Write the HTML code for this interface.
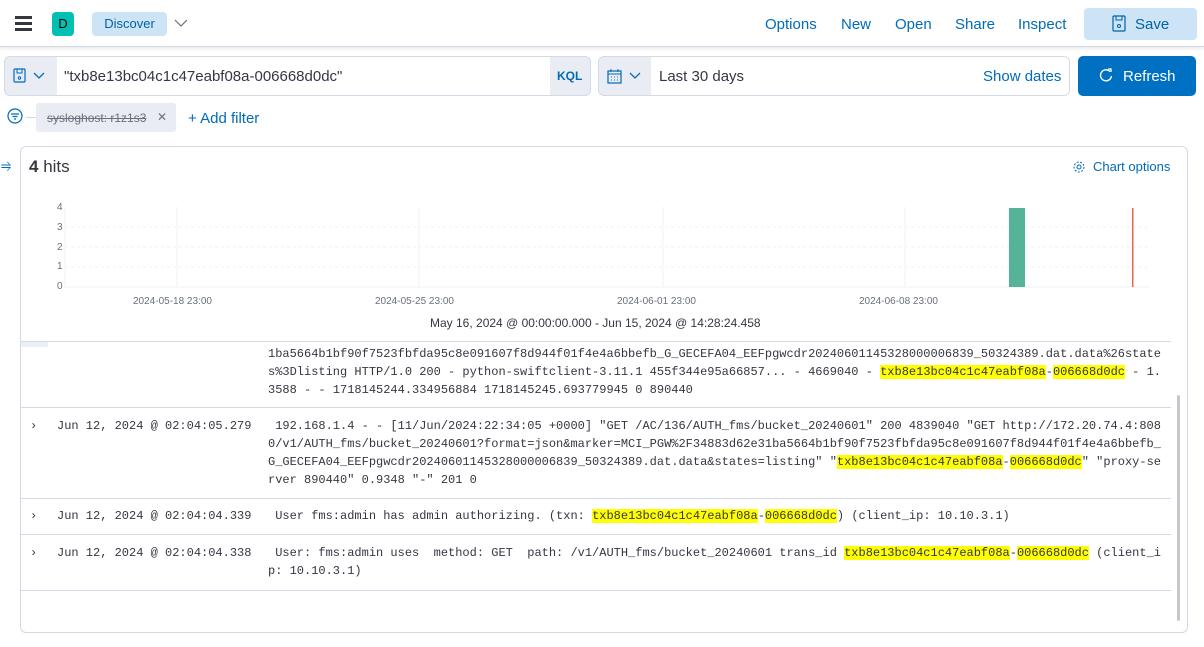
<!DOCTYPE html>
<html><head><meta charset="utf-8"><style>
*{box-sizing:border-box;margin:0;padding:0}
body{width:1204px;height:647px;background:#fff;font-family:"Liberation Sans",sans-serif;position:relative;overflow:hidden;color:#343741}
.a{position:absolute}
.link{color:#006bb8;font-size:15px}
.mono{font-family:"Liberation Mono",monospace;font-size:12px;color:#343741;line-height:18px;white-space:pre}
.hl{background:#ff0}
.sep{position:absolute;left:21px;width:1150px;height:1px;background:#d3dae6}
</style></head><body>
<div class="a" style="left:0;top:0;width:1204px;height:47px;border-bottom:1px solid #d3dae6;box-shadow:0 2px 3px rgba(0,0,0,.08)"></div>
<div class="a" style="left:15px;top:16px;width:17px;height:2.5px;background:#343741;box-shadow:0 6px 0 #343741,0 12px 0 #343741"></div>
<div class="a" style="left:52px;top:12px;width:22px;height:24px;background:#00bfb3;border-radius:4px;font-size:13px;color:#000;text-align:center;line-height:24px">D</div>
<div class="a" style="left:92px;top:12px;width:75px;height:24px;background:#cce4f5;border-radius:4px;color:#0061a6;font-size:13px;text-align:center;line-height:24px">Discover</div>
<svg class="a" style="left:174px;top:18px" width="14" height="10"><path d="M1 2l6 6 6-6" fill="none" stroke="#69707d" stroke-width="1.2"/></svg>
<div class="a link" style="left:765px;top:16px">Options</div>
<div class="a link" style="left:841px;top:16px">New</div>
<div class="a link" style="left:895px;top:16px">Open</div>
<div class="a link" style="left:955px;top:16px">Share</div>
<div class="a link" style="left:1018px;top:16px">Inspect</div>
<div class="a" style="left:1084px;top:8px;width:113px;height:32px;background:#cce4f5;border-radius:4px"></div>
<svg class="a" style="left:1112px;top:15px" width="16" height="18"><rect x="1" y="1" width="12" height="15" rx="1" fill="none" stroke="#0061a6" stroke-width="1.2"/><rect x="4" y="1" width="6" height="4" fill="none" stroke="#0061a6"/><circle cx="7" cy="11" r="1.5" fill="none" stroke="#0061a6"/></svg>
<div class="a" style="left:1135px;top:16px;color:#0061a6;font-size:15px">Save</div>
<div class="a" style="left:4px;top:56px;width:587px;height:40px;border:1px solid #d3dae6;border-radius:6px;background:#e9edf3;overflow:hidden">
  <div class="a" style="left:52px;top:0;width:493px;height:38px;background:#fff"></div>
</div>
<svg class="a" style="left:13px;top:68px" width="14" height="16"><rect x="1" y="1" width="11" height="13" rx="1" fill="none" stroke="#006bb8" stroke-width="1.2"/><rect x="4" y="1" width="5" height="4" fill="none" stroke="#006bb8"/><circle cx="6.5" cy="10" r="1.2" fill="none" stroke="#006bb8"/></svg>
<svg class="a" style="left:33px;top:72px" width="12" height="8"><path d="M1 1l5 5 5-5" fill="none" stroke="#006bb8" stroke-width="1.3"/></svg>
<div class="a" style="left:64px;top:68px;font-size:15px;color:#343741">"txb8e13bc04c1c47eabf08a-006668d0dc"</div>
<div class="a" style="left:557px;top:69px;font-size:12px;color:#006bb8;font-weight:bold">KQL</div>
<div class="a" style="left:598px;top:56px;width:472px;height:40px;border:1px solid #d3dae6;border-radius:6px;background:#e9edf3;overflow:hidden">
  <div class="a" style="left:52px;top:0;width:420px;height:38px;background:#fff"></div>
</div>
<svg class="a" style="left:607px;top:68px" width="16" height="16"><rect x="1" y="3" width="13" height="12" fill="none" stroke="#006bb8" stroke-width="1.2"/><path d="M1 6h13M4 1v3M11 1v3M4 9h1M7 9h1M10 9h1M4 12h1M7 12h1M10 12h1" stroke="#006bb8"/></svg>
<svg class="a" style="left:629px;top:72px" width="12" height="8"><path d="M1 1l5 5 5-5" fill="none" stroke="#006bb8" stroke-width="1.3"/></svg>
<div class="a" style="left:659px;top:68px;font-size:15px">Last 30 days</div>
<div class="a" style="left:983px;top:68px;font-size:15px;color:#006bb8">Show dates</div>
<div class="a" style="left:1078px;top:56px;width:118px;height:40px;background:#0071c2;border-radius:5px"></div>
<svg class="a" style="left:1099px;top:68px" width="14" height="15"><path d="M11 3.5A5.5 5.5 0 1 0 12.5 8" fill="none" stroke="#fff" stroke-width="1.4"/><path d="M9 1h3v3" fill="none" stroke="#fff" stroke-width="1.3"/></svg>
<div class="a" style="left:1123px;top:68px;font-size:15px;color:#fff">Refresh</div>
<svg class="a" style="left:7px;top:108px" width="18" height="18"><circle cx="8" cy="8" r="7" fill="none" stroke="#006bb8" stroke-width="1.2"/><path d="M4 6h8M5.5 8.5h5M7 11h2" stroke="#006bb8" stroke-width="1.2"/></svg>
<div class="a" style="left:26px;top:117px;width:10px;height:1px;background:#d3dae6"></div>
<div class="a" style="left:36px;top:103px;width:140px;height:29px;background:#e9edf3;border-radius:3px"></div>
<div class="a" style="left:47px;top:111px;font-size:12px;color:#69707d;text-decoration:line-through">sysloghost: r1z1s3</div>
<div class="a" style="left:157px;top:110px;font-size:12px;color:#69707d">✕</div>
<div class="a" style="left:188px;top:110px;font-size:15px;color:#006bb8">+ Add filter</div>
<div class="a" style="left:1px;top:157px;font-size:13px;color:#006bb8">⥤</div>
<div class="a" style="left:20px;top:146px;width:1168px;height:487px;border:1px solid #d3dae6;border-radius:6px"></div>
<div class="a" style="left:29px;top:157px;font-size:17px"><b>4</b> hits</div>
<svg class="a" style="left:1072px;top:160px" width="14" height="14"><circle cx="7" cy="7" r="2" fill="none" stroke="#006bb8"/><circle cx="7" cy="7" r="5" fill="none" stroke="#006bb8" stroke-dasharray="2 1.5"/></svg>
<div class="a" style="left:1093px;top:159px;font-size:13px;color:#006bb8">Chart options</div>
<svg class="a" style="left:0;top:195px" width="1204" height="140">
<g font-family="Liberation Sans" font-size="10" fill="#69707d">
<text x="57" y="15">4</text><text x="57" y="35">3</text><text x="57" y="55">2</text><text x="57" y="74">1</text><text x="57" y="94">0</text>
<text x="133" y="109">2024-05-18 23:00</text><text x="375" y="109">2024-05-25 23:00</text><text x="617" y="109">2024-06-01 23:00</text><text x="859" y="109">2024-06-08 23:00</text>
</g>
<g stroke="#eef2f7" stroke-dasharray="3 3"><path d="M65 32H1150M65 52H1150M65 72H1150"/></g>
<path d="M65 12V92H1150M177 12V92M419 12V92M663 12V92M905 12V92" stroke="#eef2f7" fill="none"/>
<rect x="1009" y="13" width="16" height="79" fill="#54b399"/>
<rect x="1132" y="13" width="1.5" height="79" fill="#e7664c"/>
</svg>
<div class="a" style="left:430px;top:316px;font-size:12px;color:#343741">May 16, 2024 @ 00:00:00.000 - Jun 15, 2024 @ 14:28:24.458</div>
<div class="sep" style="top:341px"></div>
<div class="a" style="left:21px;top:342px;width:27px;height:5px;background:#e9f0f8"></div>
<div class="a mono" style="left:268px;top:345px">1ba5664b1bf90f7523fbfda95c8e091607f8d944f01f4e4a6bbefb_G_GECEFA04_EEFpgwcdr20240601145328000006839_50324389.dat.data%26state
s%3Dlisting HTTP/1.0 200 - python-swiftclient-3.11.1 455f344e95a66857... - 4669040 - <span class="hl">txb8e13bc04c1c47eabf08a</span>-<span class="hl">006668d0dc</span> - 1.
3588 - - 1718145244.334956884 1718145245.693779945 0 890440</div>
<div class="sep" style="top:407px"></div>
<div class="a mono" style="left:30px;top:417px;color:#343741">›</div>
<div class="a mono" style="left:57px;top:417px">Jun 12, 2024 @ 02:04:05.279</div>
<div class="a mono" style="left:268px;top:417px"> 192.168.1.4 - - [11/Jun/2024:22:34:05 +0000] "GET /AC/136/AUTH_fms/bucket_20240601" 200 4839040 "GET http://172.20.74.4:808
0/v1/AUTH_fms/bucket_20240601?format=json&amp;marker=MCI_PGW%2F34883d62e31ba5664b1bf90f7523fbfda95c8e091607f8d944f01f4e4a6bbefb_
G_GECEFA04_EEFpgwcdr20240601145328000006839_50324389.dat.data&amp;states=listing" "<span class="hl">txb8e13bc04c1c47eabf08a</span>-<span class="hl">006668d0dc</span>" "proxy-se
rver 890440" 0.9348 "-" 201 0</div>
<div class="sep" style="top:498px"></div>
<div class="a mono" style="left:30px;top:507px">›</div>
<div class="a mono" style="left:57px;top:507px">Jun 12, 2024 @ 02:04:04.339</div>
<div class="a mono" style="left:268px;top:507px"> User fms:admin has admin authorizing. (txn: <span class="hl">txb8e13bc04c1c47eabf08a</span>-<span class="hl">006668d0dc</span>) (client_ip: 10.10.3.1)</div>
<div class="sep" style="top:534px"></div>
<div class="a mono" style="left:30px;top:544px">›</div>
<div class="a mono" style="left:57px;top:544px">Jun 12, 2024 @ 02:04:04.338</div>
<div class="a mono" style="left:268px;top:544px"> User: fms:admin uses  method: GET  path: /v1/AUTH_fms/bucket_20240601 trans_id <span class="hl">txb8e13bc04c1c47eabf08a</span>-<span class="hl">006668d0dc</span> (client_i
p: 10.10.3.1)</div>
<div class="sep" style="top:590px"></div>
<div class="a" style="left:1177px;top:395px;width:3px;height:226px;background:#c5c9cf;border-radius:2px"></div>
</body></html>
